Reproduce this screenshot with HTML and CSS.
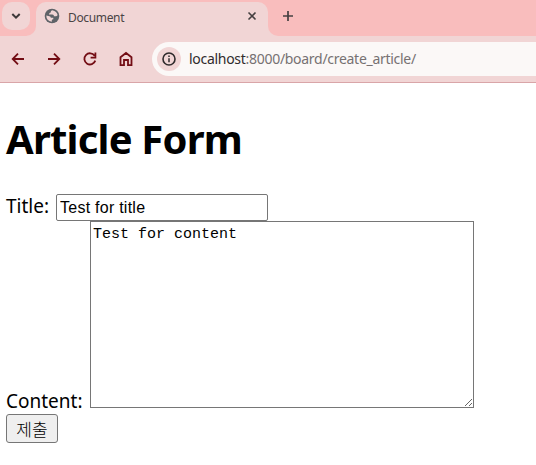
FILE: index.html
```html
<!DOCTYPE html>
<html lang="ko">
<head>
<meta charset="utf-8">
<title>Document</title>
<link rel="stylesheet" href="styles.css">
</head>
<body>
<header class="browser">
  <div class="tabstrip">
    <div class="strip-start">
      <div class="tab-search"><svg width="12" height="12" viewBox="0 0 12 12"><path d="M2.3 4 6 7.7 9.7 4" fill="none" stroke="#3d3839" stroke-width="2"/></svg></div>
    </div>
    <div class="tab-cell">
      <div class="tab">
        <svg class="globe" width="16" height="16" viewBox="0 0 16 16"><circle cx="8" cy="8" r="7.3" fill="#5f6368"/><path d="M8.3 2.3Q6.5 2.8 6.7 4.4Q5.2 4.5 4.9 6.5H8.3Q10.4 6.9 9.8 8.2H12Q13.3 8.3 13.6 7.1Q13 3.5 8.3 2.3ZM2.3 7.5Q2.3 13 7.8 13.7V12.2Q8 11.3 9.3 11.2V9.8H7.1Q6.3 9.6 6.3 8.5Z" fill="#f1d5d5"/></svg>
        <span class="tab-title">Document</span>
        <svg width="12" height="12" viewBox="0 0 12 12"><path d="m2.5 2.5 7 7m0-7-7 7" stroke="#454041" stroke-width="1.6"/></svg>
      </div>
    </div>
    <div class="strip-end"><svg width="12" height="12" viewBox="0 0 12 12"><path d="M6 1v10M1 6h10" stroke="#454041" stroke-width="1.7"/></svg></div>
  </div>
  <div class="toolbar">
    <nav class="nav">
      <svg width="16" height="16" viewBox="0 0 16 16"><path d="M14 8H3M8 2.7 2.7 8 8 13.3"/></svg>
      <svg width="16" height="16" viewBox="0 0 16 16"><path d="M2 8h11M8 2.7 13.3 8 8 13.3"/></svg>
      <svg width="16" height="16" viewBox="0 0 16 16"><path d="M12.6 4.7A5.6 5.6 0 1 0 13.3 9.6M13.4 1.6v5H8.6"/></svg>
      <svg width="16" height="16" viewBox="0 0 16 16"><path d="M2.5 6.2 8 2l5.5 4.2v7.9H10V9H6v5.1H2.5Z"/></svg>
    </nav>
    <div class="address">
      <span class="info"><svg width="16" height="16" viewBox="0 0 16 16"><circle cx="8" cy="8" r="6" fill="none" stroke="#302b2c" stroke-width="1.6"/><path d="M8 7.3v4M8 4.5v1.6" stroke="#302b2c" stroke-width="1.5"/></svg></span>
      <span class="url"><span class="host">localhost</span>:8000/board/create_article/</span>
    </div>
  </div>
</header>
<main class="page">
  <h1>Article Form</h1>
  <form>
    <div class="row title-row"><label class="title-label" for="title">Title:</label><input id="title" type="text" value="Test for title"></div>
    <div class="row content-row"><label class="content-label" for="content">Content:</label><textarea id="content">Test for content</textarea></div>
    <button type="button">제출</button>
  </form>
</main>
</body>
</html>
```
FILE: styles.css
```css
* { box-sizing: border-box; }
body { margin: 0; background: #fff; color: #000; font-family: "Noto Sans", "Noto Sans CJK KR", sans-serif; overflow: hidden; }
svg { display: block; flex: none; }
.browser { height: 83px; background: #f1d5d5; border-bottom: 1px solid #d9a5a8; }
.tabstrip { display: flex; height: 36px; }
.strip-start { width: 36px; padding: 2px; background: #f9bdbd; border-bottom-right-radius: 10px; }
.tab-search { display: flex; align-items: center; justify-content: center; width: 28px; height: 28px; background: #f1d5d5; border-radius: 10px; }
.tab-cell { width: 232px; padding-top: 2px; background: linear-gradient(#f9bdbd 14px, #f1d5d5 14px); }
.tab { display: flex; align-items: center; height: 34px; padding: 0 10px 6px 8px; background: #f1d5d5; border-radius: 10px 10px 0 0; }
.tab-title { flex: 1; margin-left: 8px; padding-top: 3px; font-size: 12px; line-height: 16px; color: #4a4445; letter-spacing: -0.35px; }
.strip-end { flex: 1; padding: 10px 14px; background: #f9bdbd; border-bottom-left-radius: 10px; }
.toolbar { display: flex; height: 46px; padding-top: 6px; }
.nav { display: flex; gap: 20px; width: 152px; padding: 9px 0 0 10px; }
.nav path { fill: none; stroke: #730d14; stroke-width: 1.8; }
.address { display: flex; align-items: center; flex: 1; height: 34px; padding-left: 5px; background: #fbf8f7; border-radius: 17px 0 0 17px; }
.info { display: flex; align-items: center; justify-content: center; width: 24px; height: 24px; background: #f1d5d5; border-radius: 50%; }
.url { margin-left: 8px; font-size: 14px; line-height: 20px; color: #767172; letter-spacing: -0.29px; white-space: nowrap; }
.host { color: #302b2c; }
.page { padding: 26px 6px 0; }
h1 { margin: 0; font-size: 40px; line-height: 60px; font-weight: 700; letter-spacing: -0.8px; white-space: nowrap; }
form { margin-top: 25px; }
.row { display: flex; font-size: 19px; line-height: 26px; }
.row label { flex: none; white-space: nowrap; }
.title-label { width: 50px; margin-top: -1px; }
.content-label { width: 84px; align-self: flex-end; margin-bottom: -6px; }
input { width: 212px; height: 27px; padding: 1px 3px; border: 1px solid #767676; border-radius: 2px; font: 16px "Liberation Sans", sans-serif; letter-spacing: 0.25px; }
textarea { width: 384px; height: 187px; padding: 4px 2px; border: 1px solid #767676; border-radius: 0; font: 15px/18px "Liberation Mono", monospace; }
button { display: block; width: 52px; height: 29px; margin-top: 6px; padding: 0; background: #efefef; border: 1px solid #767676; border-radius: 3px; font: 300 17px/25px "Noto Sans CJK KR", sans-serif; color: #000; }
```
